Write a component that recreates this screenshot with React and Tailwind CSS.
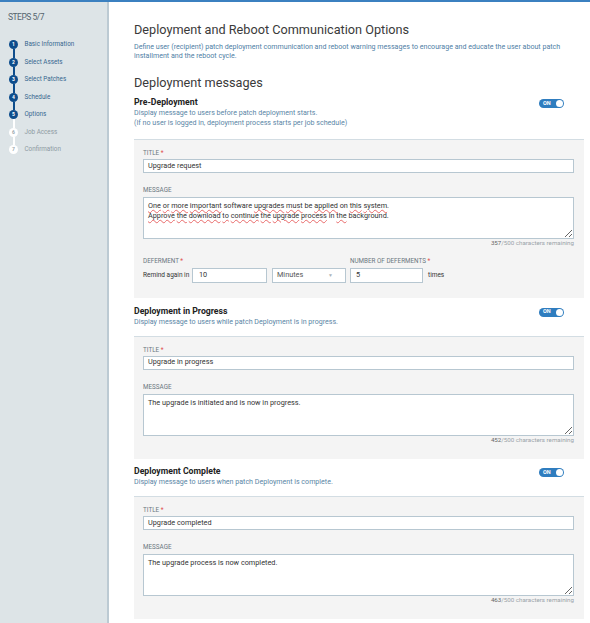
import React from "react";

const steps = [
  { n: 1, label: "Basic Information", done: true },
  { n: 2, label: "Select Assets", done: true },
  { n: 3, label: "Select Patches", done: true },
  { n: 4, label: "Schedule", done: true },
  { n: 5, label: "Options", done: true },
  { n: 6, label: "Job Access", done: false },
  { n: 7, label: "Confirmation", done: false },
];

const Req = () => <span className="text-[#e0524f]"> *</span>;

const Label = ({ children, req }) => (
  <div className="text-[6.3px] leading-[8px] uppercase whitespace-nowrap text-[#6b7780]">
    {children}
    {req && <Req />}
  </div>
);

const Toggle = () => (
  <div className="flex items-center justify-between w-[25px] h-[9px] rounded-full bg-[#2f7dbf] pl-[4px] pr-[1px] mr-[20px] mt-[2px]">
    <span className="text-[5.5px] font-bold leading-none text-white">ON</span>
    <span className="w-[7px] h-[7px] rounded-full bg-white" />
  </div>
);

const Sp = ({ children }) => (
  <span className="underline decoration-wavy decoration-[#e86a6a] [text-decoration-thickness:0.4px] underline-offset-[1px]">
    {children}
  </span>
);

const MessageBox = ({ children, used }) => (
  <>
    <div className="mt-[13px]">
      <Label>Message</Label>
    </div>
    <div className="mt-[3px] h-[42px] bg-white border border-[#b7c7d1] px-[4px] py-[3px] text-[7.3px] leading-[10px] text-[#333] resize-y overflow-auto">
      {children}
    </div>
    <div className="text-right text-[6.2px] leading-[8px] text-[#9aa3a9]">
      <span className="text-[#666]">{used}</span>/500 characters remaining
    </div>
  </>
);

const TitleBox = ({ value }) => (
  <>
    <Label req>Title</Label>
    <div className="mt-[2px] h-[14px] bg-white border border-[#b7c7d1] px-[4px] flex items-center text-[7.3px] text-[#333]">
      {value}
    </div>
  </>
);

const SectionHead = ({ title, lines }) => (
  <div className="flex items-start justify-between">
    <div>
      <div className="text-[8.7px] leading-[11px] font-bold text-[#222]">{title}</div>
      {lines.map((l, i) => (
        <div key={i} className="text-[7.1px] leading-[10px] text-[#5a86a6]">
          {l}
        </div>
      ))}
    </div>
    <Toggle />
  </div>
);

const Panel = ({ children, className = "" }) => (
  <div className={"bg-[#f4f4f4] border-t-[1.5px] border-[#d3dde3] pl-[9px] pr-[10px] pt-[9px] pb-[15px] " + className}>
    {children}
  </div>
);

export default function App() {
  return (
    <div
      className="min-h-screen flex flex-col bg-white"
      style={{ fontFamily: "Roboto, 'Liberation Sans', sans-serif" }}
    >
      <div className="h-[2px] bg-[#3b80c0]" />
      <div className="flex flex-1">
        <aside className="w-[109px] shrink-0 bg-[#dde4e7] border-r-2 border-[#bccad3] pl-[8px] pt-[10px]">
          <div className="text-[8.5px] leading-[11px] tracking-[-0.5px] text-[#56656f]">STEPS 5/7</div>
          <div className="mt-[17px] flex flex-col">
            {steps.map((s, i) => (
              <div key={s.n} className="flex items-start">
                <div className="flex flex-col items-center w-[10px] ml-[0.5px]">
                  <div
                    className={
                      "w-[9px] h-[9px] rounded-full flex items-center justify-center text-[5px] font-bold leading-none " +
                      (s.done ? "bg-[#0e4d8c] text-white" : "bg-white text-[#9aa6ad]")
                    }
                  >
                    {s.n}
                  </div>
                  {i < steps.length - 1 && (
                    <div className={"w-[2px] h-[8.5px] " + (s.n < 5 ? "bg-[#0e4d8c]" : "bg-white")} />
                  )}
                </div>
                <div
                  className={
                    "ml-[6px] text-[6.3px] leading-[9px] " + (s.done ? "text-[#36678f]" : "text-[#8d9aa2]")
                  }
                >
                  {s.label}
                </div>
              </div>
            ))}
          </div>
        </aside>

        <main className="flex-1 pl-[25px] pr-[6px] pt-[20px] pb-[6px]">
          <h1 className="text-[12.7px] leading-[16px] text-[#3a3a3a]">Deployment and Reboot Communication Options</h1>
          <p className="mt-[4px] text-[7.1px] leading-[9px] text-[#4f80a6]">
            Define user (recipient) patch deployment communication and reboot warning messages to encourage and educate the user about patch
            installment and the reboot cycle.
          </p>
          <h2 className="mt-[14.5px] text-[12.7px] leading-[16px] text-[#3a3a3a]">Deployment messages</h2>

          <div className="mt-[6.5px]">
            <SectionHead
              title="Pre-Deployment"
              lines={[
                "Display message to users before patch deployment starts.",
                "(If no user is logged in, deployment process starts per job schedule)",
              ]}
            />
          </div>
          <Panel className="mt-[11px]">
            <TitleBox value="Upgrade request" />
            <MessageBox used="357">
              <div>
                <Sp>One</Sp> <Sp>or</Sp> <Sp>more</Sp> <Sp>important</Sp> software <Sp>upgrades</Sp> <Sp>must</Sp> be{" "}
                <Sp>applied</Sp> on <Sp>this</Sp> <Sp>system</Sp>.
              </div>
              <div>
                <Sp>Approve</Sp> <Sp>the</Sp> <Sp>download</Sp> <Sp>to</Sp> <Sp>continue</Sp> <Sp>the</Sp> <Sp>upgrade</Sp>{" "}
                <Sp>process</Sp> in <Sp>the</Sp> background.
              </div>
            </MessageBox>
            <div className="mt-[10px] flex items-end">
              <div className="flex flex-col">
                <Label req>Deferment</Label>
                <div className="mt-[3px] flex items-center">
                  <span className="text-[6.5px] whitespace-nowrap text-[#333] w-[49px]">Remind again in</span>
                  <div className="w-[75px] h-[15px] bg-white border border-[#b7c7d1] px-[6px] flex items-center text-[7.3px] text-[#333]">
                    10
                  </div>
                  <div className="ml-[5px] w-[74px] h-[15px] bg-white border border-[#b7c7d1] pl-[4px] pr-[12px] flex items-center justify-between text-[7.3px] text-[#555]">
                    <span>Minutes</span>
                    <span className="text-[5px] text-[#aab3b9]">▼</span>
                  </div>
                </div>
              </div>
              <div className="ml-[4px] flex flex-col">
                <Label req>Number of deferments</Label>
                <div className="mt-[3px] flex items-center">
                  <div className="w-[73px] h-[15px] bg-white border border-[#b7c7d1] px-[5px] flex items-center text-[7.3px] text-[#333]">
                    5
                  </div>
                  <span className="ml-[5px] text-[6.5px] text-[#333]">times</span>
                </div>
              </div>
            </div>
          </Panel>

          <div className="mt-[7.5px]">
            <SectionHead
              title="Deployment in Progress"
              lines={["Display message to users while patch Deployment is in progress."]}
            />
          </div>
          <Panel className="mt-[9px]">
            <TitleBox value="Upgrade in progress" />
            <MessageBox used="452">The upgrade is initiated and is now in progress.</MessageBox>
          </Panel>

          <div className="mt-[7.5px]">
            <SectionHead
              title="Deployment Complete"
              lines={["Display message to users when patch Deployment is complete."]}
            />
          </div>
          <Panel className="mt-[9px]">
            <TitleBox value="Upgrade completed" />
            <MessageBox used="463">The upgrade process is now completed.</MessageBox>
          </Panel>
        </main>
      </div>
    </div>
  );
}
